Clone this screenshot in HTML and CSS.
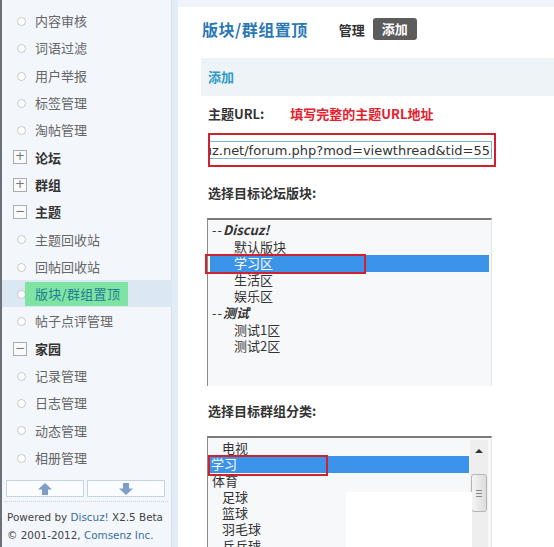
FILE: index.html
```
<!DOCTYPE html>
<html lang="zh-CN">
<head>
    <meta charset="UTF-8">
    <title>版块/群组置顶 - Discuz! 管理中心</title>
    <link rel="stylesheet" href="styles.css">
</head>
<body>
<div class="frame">

    <!-- Left menu -->
    <aside class="sidebar">
        <ul class="menu">
            <li class="item">内容审核</li>
            <li class="item">词语过滤</li>
            <li class="item">用户举报</li>
            <li class="item">标签管理</li>
            <li class="item">淘帖管理</li>
            <li class="group"><span class="toggle">+</span>论坛</li>
            <li class="group"><span class="toggle">+</span>群组</li>
            <li class="group"><span class="toggle">−</span>主题</li>
            <li class="item">主题回收站</li>
            <li class="item">回帖回收站</li>
            <li class="item active"><span class="mark">版块/群组置顶</span></li>
            <li class="item">帖子点评管理</li>
            <li class="group"><span class="toggle">−</span>家园</li>
            <li class="item">记录管理</li>
            <li class="item">日志管理</li>
            <li class="item">动态管理</li>
            <li class="item">相册管理</li>
        </ul>

        <div class="scroll-btns">
            <button class="scroll-btn" title="向上">
                <svg width="14" height="12" viewBox="0 0 14 12"><path d="M7 0 L14 6.5 H10 V12 H4 V6.5 H0 Z" fill="#7d9fc5"/></svg>
            </button>
            <button class="scroll-btn" title="向下">
                <svg width="14" height="12" viewBox="0 0 14 12"><path d="M7 12 L14 5.5 H10 V0 H4 V5.5 H0 Z" fill="#7d9fc5"/></svg>
            </button>
        </div>

        <div class="copyright">
            <p>Powered by <a href="#">Discuz!</a> X2.5 Beta</p>
            <p>&copy; 2001-2012, <a href="#">Comsenz Inc.</a></p>
        </div>
    </aside>

    <!-- Main content -->
    <main class="main">
        <div class="title-row">
            <h1>版块/群组置顶</h1>
            <a class="tab" href="#">管理</a>
            <a class="tab current" href="#">添加</a>
        </div>

        <div class="section-bar">添加</div>

        <div class="form-body">
            <div class="label">主题URL:<span class="hint">填写完整的主题URL地址</span></div>

            <div class="url-wrap">
                <div class="url-input"><span>discuz.net/forum.php?mod=viewthread&amp;tid=55</span></div>
                <div class="annot url-annot"></div>
            </div>

            <div class="label label-gap">选择目标论坛版块:</div>

            <div class="listbox forum-list">
                <div class="opt cat"><span>--</span><b>Discuz!</b></div>
                <div class="opt sub">默认版块</div>
                <div class="opt sub selected">学习区</div>
                <div class="opt sub">生活区</div>
                <div class="opt sub">娱乐区</div>
                <div class="opt cat"><span>--</span><b>测试</b></div>
                <div class="opt sub">测试1区</div>
                <div class="opt sub">测试2区</div>
                <div class="annot forum-annot"></div>
            </div>

            <div class="label">选择目标群组分类:</div>

            <div class="listbox group-list">
                <div class="group-opts">
                    <div class="opt g2">电视</div>
                    <div class="opt g0 selected">学习</div>
                    <div class="opt g1">体育</div>
                    <div class="opt g2">足球</div>
                    <div class="opt g2">篮球</div>
                    <div class="opt g2">羽毛球</div>
                    <div class="opt g2">乒乓球</div>
                </div>
                <div class="scrollbar">
                    <span class="arrow"></span>
                    <span class="thumb"><i></i><i></i><i></i></span>
                </div>
                <div class="patch"></div>
                <div class="annot group-annot"></div>
            </div>
        </div>
    </main>

</div>
</body>
</html>
```

FILE: styles.css
```
/* Reset default styles */
* {
    margin: 0;
    padding: 0;
    box-sizing: border-box;
}

body {
    font-family: "Noto Sans CJK SC", "Liberation Sans", sans-serif;
    font-size: 13px;
    color: #333;
    background-color: #fff;
}

.frame {
    display: flex;
    width: 554px;
    height: 547px;
    overflow: hidden;
}

/* Sidebar */
.sidebar {
    width: 178px;
    flex-shrink: 0;
    background-color: #f3f7fb;
    border-left: 2px solid #6c7177;
    border-right: 6px solid #e2ecf6;
    box-shadow: inset -1px 0 0 #d5e2ee;
}

.menu {
    list-style: none;
    padding-top: 7px;
}

.menu li {
    height: 27.3px;
    display: flex;
    align-items: center;
    padding-left: 33px;
    position: relative;
    white-space: nowrap;
}

.menu .item {
    color: #666;
}

.menu .item::before {
    content: "";
    position: absolute;
    left: 15px;
    top: 10px;
    width: 7px;
    height: 7px;
    border: 1px solid #c4c8cc;
    border-radius: 50%;
    background-color: #fff;
}

.menu .group {
    font-weight: bold;
    color: #333;
}

.toggle {
    position: absolute;
    left: 11px;
    top: 7px;
    width: 14px;
    height: 14px;
    border: 1px solid #a9adb2;
    background-color: #fafafa;
    color: #777;
    font-family: "DejaVu Sans", sans-serif;
    font-weight: normal;
    font-size: 12px;
    line-height: 11px;
    text-align: center;
}

.menu .active {
    background-color: #dbe8f4;
    padding-left: 23px;
}

.menu .active .mark {
    background-color: #7ee3a3;
    color: #1e7f93;
    padding: 2px 8px 2px 10px;
    line-height: 20px;
    letter-spacing: 0.3px;
    position: relative;
}

.scroll-btns {
    display: flex;
    gap: 3px;
    padding: 9px 0 0 4px;
}

.scroll-btn {
    width: 78px;
    height: 17px;
    border: 1px solid #c6d4e1;
    background-color: #fbfcfe;
    display: flex;
    align-items: center;
    justify-content: center;
}

.copyright {
    margin: 4px 4px 0 2px;
    border-top: 1px dotted #c9d2da;
    padding: 6px 0 0 3px;
    font-family: "DejaVu Sans", sans-serif;
    font-size: 10.4px;
    line-height: 18px;
    color: #444;
    white-space: nowrap;
}

.copyright a {
    color: #3b6d9f;
    text-decoration: none;
}

/* Main */
.main {
    flex: 1;
    border-top: 7px solid #eef4f9;
    padding-left: 23px;
}

.title-row {
    display: flex;
    align-items: center;
    height: 22px;
    margin-top: 11px;
}

.title-row h1 {
    font-size: 16px;
    color: #2a78b6;
    margin: 0 31px 0 1px;
    letter-spacing: 0.5px;
}

.tab {
    color: #333;
    font-weight: bold;
    text-decoration: none;
    margin-right: 8px;
}

.tab.current {
    background-color: #5c5c5c;
    color: #fff;
    border-radius: 3px;
    padding: 0 9px;
    line-height: 22px;
}

.section-bar {
    margin-top: 18px;
    height: 38px;
    line-height: 38px;
    background-color: #eef3f8;
    padding-left: 7px;
    font-weight: bold;
    color: #2c9bc4;
}

.form-body {
    padding-left: 7px;
}

.label {
    margin-top: 16px;
    height: 18px;
    line-height: 18px;
    font-weight: bold;
    color: #333;
}

.form-body > .label:first-child {
    margin-top: 9px;
}

.label-gap {
    margin-top: 25px;
}

.hint {
    color: #e3202b;
    margin-left: 26px;
}

.url-wrap {
    position: relative;
    margin: 18px 0 0 1px;
    width: 283px;
}

.url-input {
    height: 18px;
    border: 1px solid #7fb3d3;
    background-color: #fff;
    overflow: hidden;
    display: flex;
    justify-content: flex-end;
    align-items: center;
    white-space: nowrap;
    font-family: "DejaVu Sans", sans-serif;
    font-size: 13px;
    color: #333;
    padding-right: 1px;
}

/* red annotation rectangles drawn over the screenshot */
.annot {
    position: absolute;
    border: 2px solid #d0222e;
    pointer-events: none;
}

.url-annot {
    left: -1px;
    top: -8px;
    width: 288px;
    height: 34px;
}

.listbox {
    position: relative;
    margin: 16px 0 0 -1px;
    width: 285px;
    background-color: #f7f8fa;
    border-top: 2px solid #7a7a7a;
    border-left: 1px solid #8c8c8c;
    border-right: 1px solid #e4e4e4;
    padding: 2px 2px 0;
}

.forum-list {
    height: 168px;
}

.opt {
    height: 16.6px;
    line-height: 16.6px;
    white-space: nowrap;
    color: #333;
}

.opt.cat {
    padding-left: 2px;
    font-style: italic;
}

.opt.cat span {
    font-style: normal;
    letter-spacing: 1px;
}

.opt.sub {
    padding-left: 24px;
}

.opt.selected {
    background-color: #3b93ea;
    color: #fff;
}

.forum-annot {
    left: -3px;
    top: 34px;
    width: 161px;
    height: 20px;
}

.group-list {
    height: 120px;
    display: flex;
    padding: 2px 3px 0 2px;
}

.group-opts {
    flex: 1;
}

.group-opts .opt {
    height: 16.3px;
    line-height: 16.3px;
}

.opt.g0 {
    padding-left: 1px;
}

.opt.g1 {
    padding-left: 2px;
}

.opt.g2 {
    padding-left: 12px;
}

.scrollbar {
    width: 18px;
    margin-left: 1px;
    background-color: #eeeeee;
    position: relative;
}

.scrollbar .arrow {
    position: absolute;
    left: 5px;
    top: 9px;
    border: 4px solid transparent;
    border-bottom: 4px solid #333;
    border-top: none;
}

.scrollbar .thumb {
    position: absolute;
    left: 1px;
    top: 34px;
    width: 16px;
    height: 38px;
    border: 1px solid #b5b5b5;
    border-radius: 3px;
    background: linear-gradient(to right, #f4f4f4, #dcdcdc);
    display: flex;
    flex-direction: column;
    align-items: center;
    justify-content: center;
    gap: 2px;
}

.scrollbar .thumb i {
    width: 6px;
    height: 1px;
    background-color: #888;
}

.patch {
    position: absolute;
    left: 138px;
    top: 54px;
    width: 126px;
    height: 70px;
    background-color: #fff;
}

.group-annot {
    left: 0;
    top: 17px;
    width: 120px;
    height: 21px;
}
```
